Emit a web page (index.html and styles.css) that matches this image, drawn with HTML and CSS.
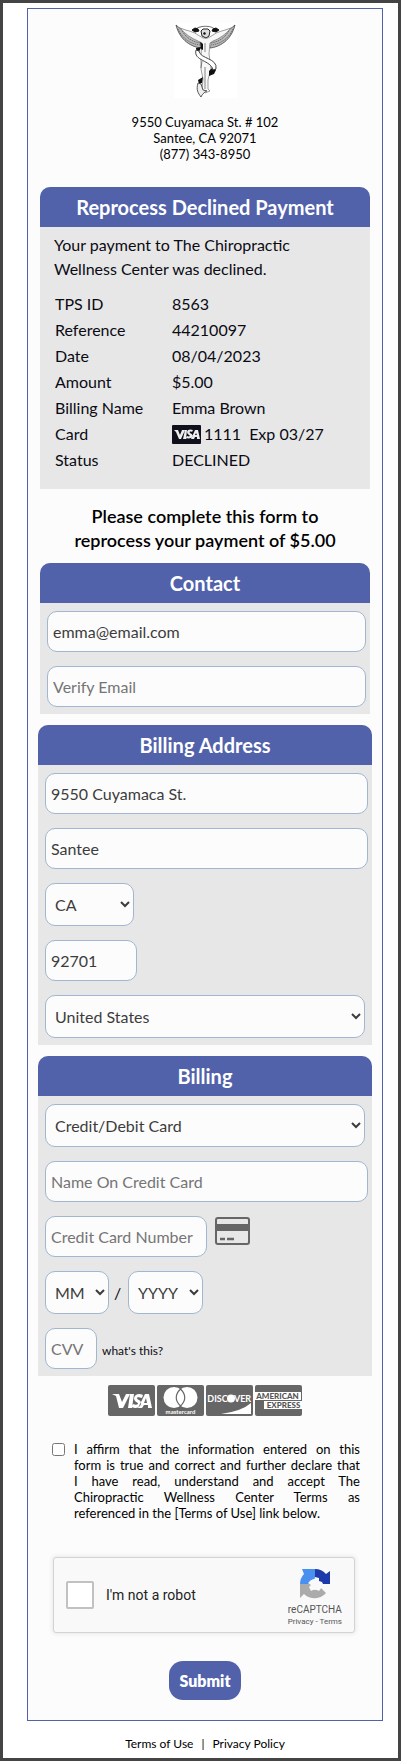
FILE: index.html
```html
<!DOCTYPE html>
<html lang="en">
<head>
<meta charset="utf-8">
<meta name="viewport" content="width=device-width, initial-scale=1">
<title>Reprocess Declined Payment</title>
<link rel="stylesheet" href="styles.css">
</head>
<body class="page">
<main class="sheet">
  <header class="brand">
    <svg class="brand-logo" viewBox="0 0 63 75" role="img" aria-label="Chiropractic emblem">
      <rect width="63" height="75" fill="#fff"/>
      <g fill="#b8b8b8" stroke="#444" stroke-width=".8" stroke-linejoin="round">
        <path d="M2 2C8 8 17 10 23 13L28 18 27 25C18 24 6 18 2 2Z"/>
        <path d="M61 2C55 8 46 10 40 13L35 18 36 25C45 24 57 18 61 2Z"/>
      </g>
      <path d="M4 6C8 15 16 21 26 22M7 6C12 15 18 19 27 20M59 6C55 15 47 21 37 22M56 6C51 15 45 19 36 20" fill="none" stroke="#555" stroke-width=".8" stroke-dasharray="1.5 .8"/>
      <path d="M6 5C13 8 19 8 24 12L29 15H34L39 12C44 8 50 8 57 5C52 11 45 16 39 18L36 20 35 31 37 45 34 57 34 66 36 68 31 70 28 66 29 56 27 46 27 32 28 20 24 18C17 15 11 11 6 5Z" fill="#f7f7f7" stroke="#777" stroke-width=".7"/>
      <path d="M21 7C25 2 38 2 41 7" fill="none" stroke="#777" stroke-width="1.2"/>
      <path d="M18 7l3-2 3 1 1 2-4 1zM45 7l-3-2-3 1-1 2 4 1z" fill="#111" stroke="#111"/>
      <path d="M27 8l2-2h5l2 2-1 5-3 2-4-2z" fill="#ddd" stroke="#222"/>
      <path d="M29 10l2-1 1 2-2 1z" fill="#111"/>
      <path d="M26 19l3 2v6l-2-1zM22 25l5-1-1 3-3 4zM40 43l2 4-2 4-5 2v-5zM24 57l5-3-1 6-3 1z" fill="#111"/>
      <path d="M22 27C19 38 37 37 39 47L42 46C44 35 26 36 25 28Z" fill="#fff" stroke="#333" stroke-width=".9"/>
      <path d="M31 20v9M31 44v22M28 38l-1 7" stroke="#555" stroke-width=".7"/>
      <path d="M24 60C22 67 24 70 27 74C28 71 32 68 33 68L29 67 27 61Z" fill="#eee" stroke="#444" stroke-width=".9"/>
    </svg>
    <address class="brand-address">9550 Cuyamaca St. # 102<br>Santee, CA 92071<br>(877) 343-8950</address>
  </header>

  <section class="panel panel-narrow">
    <h1 class="panel-title">Reprocess Declined Payment</h1>
    <div class="summary">
      <p class="summary-text">Your payment to The Chiropractic Wellness Center was declined.</p>
      <table class="details">
        <tr><th scope="row">TPS ID</th><td>8563</td></tr>
        <tr><th scope="row">Reference</th><td>44210097</td></tr>
        <tr><th scope="row">Date</th><td>08/04/2023</td></tr>
        <tr><th scope="row">Amount</th><td>$5.00</td></tr>
        <tr><th scope="row">Billing Name</th><td>Emma Brown</td></tr>
        <tr><th scope="row">Card</th><td><span class="card-line"><svg class="visa-small" viewBox="0 0 29 19" role="img" aria-label="Visa"><rect width="29" height="19" rx="1" fill="#10101c"/><path d="M2 5h4l2 5 2-5h3l-4 9H7L4 7zM13 5h2l-1 9h-3zM21 5l-1 2c-2-1-3 0-2 1 5 2 2 7-4 5l1-2c2 1 4 0 2-1-4-3-1-7 4-5zM23 5h3l2 9h-3v-2h-2l-1 2h-3zm1 3l-1 2h2z" fill="#eee" fill-rule="evenodd"/></svg><span>1111</span><span class="card-exp">Exp 03/27</span></span></td></tr>
        <tr><th scope="row">Status</th><td>DECLINED</td></tr>
      </table>
    </div>
  </section>

  <p class="prompt">Please complete this form to reprocess your payment of $5.00</p>

  <form class="form">
    <section class="panel panel-narrow">
      <h2 class="panel-title">Contact</h2>
      <div class="fields">
        <input class="control" type="email" aria-label="Email" value="emma@email.com">
        <input class="control" type="email" aria-label="Verify Email" placeholder="Verify Email">
      </div>
    </section>

    <section class="panel">
      <h2 class="panel-title">Billing Address</h2>
      <div class="fields">
        <input class="control" type="text" aria-label="Street address" value="9550 Cuyamaca St.">
        <input class="control" type="text" aria-label="City" value="Santee">
        <select class="control select state" aria-label="State"><option>CA</option></select>
        <input class="control zip" type="text" aria-label="Zip code" value="92701">
        <select class="control select select-wide" aria-label="Country"><option>United States</option></select>
      </div>
    </section>

    <section class="panel">
      <h2 class="panel-title">Billing</h2>
      <div class="fields">
        <select class="control select select-wide" aria-label="Payment method"><option>Credit/Debit Card</option></select>
        <input class="control" type="text" aria-label="Name On Credit Card" placeholder="Name On Credit Card">
        <div class="field-row number-row">
          <input class="control number" type="text" aria-label="Credit Card Number" placeholder="Credit Card Number">
          <svg class="card-icon" viewBox="0 0 35 28" aria-hidden="true"><rect x="1" y="1" width="33" height="26" rx="2" fill="none" stroke="#666" stroke-width="2"/><path d="M1 7h33v7H1z" fill="#666"/><path d="M5 22h5M12 22h7" stroke="#666" stroke-width="2.4"/></svg>
        </div>
        <div class="field-row">
          <select class="control select month" aria-label="Expiration month"><option>MM</option></select>
          <span class="slash">/</span>
          <select class="control select year" aria-label="Expiration year"><option>YYYY</option></select>
        </div>
        <div class="field-row">
          <input class="control cvv" type="text" aria-label="CVV" placeholder="CVV">
          <a class="hint" href="#cvv">what's this?</a>
        </div>
      </div>
    </section>

    <div class="brands">
      <svg class="pay-brand" viewBox="0 0 47 31" role="img" aria-label="Visa"><rect width="47" height="31" rx="2" fill="#666"/><path d="M4 9h7l3 8 4-8h4l-7 14h-4L8 11zM22 9h4l-2 14h-4zM35 10l-1 3c-3-1-5-1-5 0 0 2 5 2 4 6-1 4-6 5-9 3l1-3c2 1 4 1 5 0 0-2-4-2-4-6 1-4 5-5 9-3zM37 9h4l3 14h-4v-3h-4l-2 3h-4zm1 4l-2 5h3z" fill="#fff" fill-rule="evenodd"/></svg>
      <svg class="pay-brand" viewBox="0 0 47 31" role="img" aria-label="Mastercard"><rect width="47" height="31" rx="2" fill="#666"/><g fill="#fff"><circle cx="17" cy="12.500" r="10.500"/><circle cx="30" cy="12.500" r="10.500"/></g><path d="M23.500 4Q15 12.500 23.500 21Q32 12.500 23.500 4Z" fill="#fff" stroke="#666" stroke-width="1.200"/><text x="23.500" y="29" class="brand-text mastercard">mastercard</text></svg>
      <svg class="pay-brand" viewBox="0 0 47 31" role="img" aria-label="Discover"><rect width="47" height="31" rx="2" fill="#666"/><text x="11.500" y="16.500" class="brand-text discover">DISC</text><circle cx="25" cy="13.500" r="4" fill="#fff"/><text x="36.500" y="16.500" class="brand-text discover">VER</text><path d="M15 29Q36 26 45 18V29Z" fill="#fff"/></svg>
      <svg class="pay-brand" viewBox="0 0 47 31" role="img" aria-label="American Express"><rect width="47" height="31" rx="2" fill="#666"/><path d="M0 7h46v8H0zM9 16h38v8H9z" fill="#fff"/><text x="22.500" y="14" class="brand-text amex">AMERICAN</text><text x="28.500" y="23" class="brand-text amex">EXPRESS</text></svg>
    </div>

    <div class="affirm">
      <input class="affirm-box" type="checkbox" id="affirm">
      <label for="affirm">I affirm that the information entered on this form&nbsp;is true and correct and further declare that I&nbsp;have read, understand and accept The Chiropractic Wellness Center Terms as referenced&nbsp;in the [Terms of Use] link below.</label>
    </div>

    <div class="captcha">
      <input class="captcha-box" type="checkbox" id="robot">
      <label class="captcha-label" for="robot">I'm not a robot</label>
      <div class="captcha-brand">
        <svg class="captcha-logo" viewBox="0 0 32 32" aria-hidden="true"><path d="M1 16A15 15 0 0 1 5 6L3 1H16V11Q11 11 11 16Z" fill="#4a90ee"/><path d="M16 1A15 15 0 0 1 27 6L31 3V16H16Z" fill="#1c3aa9"/><path d="M1 16H14L11 19C14 23 19 23 21 19L27 25A15 15 0 0 1 5 26L1 30Z" fill="#ababab"/><path d="M9 15l3-3 3 1 1-4 4 1v3l3 1 1 2-4 1 3 2-3 4-4-2-4 2-2-4 2-2z" fill="#f9f9f9"/></svg>
        <span class="captcha-name">reCAPTCHA</span>
        <span class="captcha-links"><a href="#privacy">Privacy</a> - <a href="#terms">Terms</a></span>
      </div>
    </div>

    <button class="submit" type="submit">Submit</button>
  </form>
</main>
<footer class="footer"><a href="#terms">Terms of Use</a><span>|</span><a href="#privacy">Privacy Policy</a></footer>
</body>
</html>
```

FILE: styles.css
```css
* {
  box-sizing: border-box;
}

.page {
  margin: 0;
  padding: 5px 15px 0 24px;
  min-height: 100vh;
  border: 3px solid #444;
  background: #fff;
  color: #0b0b14;
  font: 16px/24px Lato, "Open Sans", sans-serif;
}

.page a {
  color: inherit;
  text-decoration: none;
}

.sheet {
  padding: 14px 10px 20px;
  border: 1px solid #5162ab;
  background: #fcfcfc;
}

.brand {
  display: flex;
  flex-direction: column;
  align-items: center;
  gap: 16px;
  margin-bottom: 25px;
  color: #000;
}

.brand-logo {
  width: 63px;
  height: 75px;
}

.brand-address {
  font-size: 13px;
  font-style: normal;
  line-height: 16px;
  text-align: center;
}

.panel {
  background: #e7e7e7;
  border-radius: 10px 10px 0 0;
}

.panel-narrow {
  margin: 0 2px;
}

.panel-title {
  margin: 0;
  padding: 8px;
  border-radius: 10px 10px 0 0;
  background: #5162ab;
  color: #fff;
  font-size: 20px;
  font-weight: 700;
  line-height: 24px;
  text-align: center;
}

.summary {
  padding: 6px 14px 16px;
}

.summary-text {
  margin: 0 0 10px;
}

.details {
  width: 100%;
  border-collapse: collapse;
}

.details th,
.details td {
  height: 26px;
  padding: 0 1px;
  font-weight: 400;
  text-align: left;
}

.details th {
  width: 117px;
}

.card-line {
  display: flex;
  align-items: center;
  gap: 3px;
}

.visa-small {
  width: 29px;
  height: 19px;
}

.card-exp {
  margin-left: 5px;
}

.prompt {
  margin: 15px 30px 11px;
  color: #000;
  font-size: 18px;
  font-weight: 600;
  text-align: center;
}

.form {
  display: flex;
  flex-direction: column;
  gap: 11px;
}

.fields {
  display: flex;
  flex-direction: column;
  align-items: flex-start;
  gap: 14px;
  padding: 8px 4px 7px 7px;
}

.control {
  width: 100%;
  height: 41px;
  padding: 2px 5px;
  border: 1px solid #a1b6d0;
  border-radius: 10px;
  background: #fcfcfc;
  color: #3c3c3c;
  font: inherit;
}

.control::placeholder {
  color: #757575;
}

.select {
  height: 43px;
}

.select-wide {
  width: calc(100% - 3px);
}

.state {
  width: 89px;
}

.zip {
  width: 92px;
}

.number {
  width: 162px;
}

.month {
  width: 64px;
}

.year {
  width: 75px;
}

.cvv {
  width: 52px;
}

.field-row {
  display: flex;
  align-items: center;
  gap: 5px;
}

.number-row {
  align-items: flex-start;
  gap: 8px;
}

.card-icon {
  width: 35px;
  height: 28px;
  margin-top: 1px;
}

.slash {
  width: 9px;
}

.hint {
  padding-top: 4px;
  font-size: 12px;
}

.brands {
  display: flex;
  justify-content: center;
  gap: 2px;
  margin-top: -2px;
}

.pay-brand {
  width: 47px;
  height: 31px;
}

.brand-text {
  fill: #fff;
  font-family: Lato, sans-serif;
  font-weight: 700;
  text-anchor: middle;
}

.mastercard {
  font-size: 6px;
}

.discover {
  font-size: 9px;
}

.amex {
  fill: #555;
  font-size: 8px;
  font-weight: 900;
}

.affirm {
  display: flex;
  align-items: flex-start;
  gap: 9px;
  margin: 14px 12px 0 14px;
  color: #000;
  font-size: 13px;
  line-height: 16px;
  text-align: justify;
}

.affirm-box {
  flex: none;
  width: 13px;
  height: 13px;
  margin: 2px 0 0;
}

.captcha {
  display: flex;
  align-items: center;
  gap: 12px;
  height: 76px;
  margin: 25px 17px 0 15px;
  padding: 0 12px;
  border: 1px solid #d3d3d3;
  border-radius: 3px;
  background: #f9f9f9;
  box-shadow: 0 0 4px 1px #00000014;
  color: #222;
  font-family: Roboto, sans-serif;
}

.captcha-box {
  appearance: none;
  width: 28px;
  height: 28px;
  margin: 0;
  border: 2px solid #c1c1c1;
  border-radius: 2px;
  background: #fff;
}

.captcha-label {
  flex: 1;
  font-size: 14px;
}

.captcha-brand {
  display: flex;
  flex-direction: column;
  align-items: center;
  padding-top: 6px;
  color: #555;
}

.captcha-logo {
  width: 32px;
  height: 32px;
  margin-bottom: 4px;
}

.captcha-name {
  font-size: 10px;
  line-height: 12px;
}

.captcha-links {
  font-size: 8px;
  line-height: 12px;
}

.submit {
  align-self: center;
  height: 39px;
  margin-top: 17px;
  padding: 0 10px;
  border: 0;
  border-radius: 14px;
  background: #5162ab;
  color: #fff;
  font: inherit;
  font-weight: 800;
}

.footer {
  display: flex;
  justify-content: center;
  gap: 8px;
  padding: 15px 0 5px;
  color: #000;
  font-size: 12px;
  line-height: 16px;
}
```
